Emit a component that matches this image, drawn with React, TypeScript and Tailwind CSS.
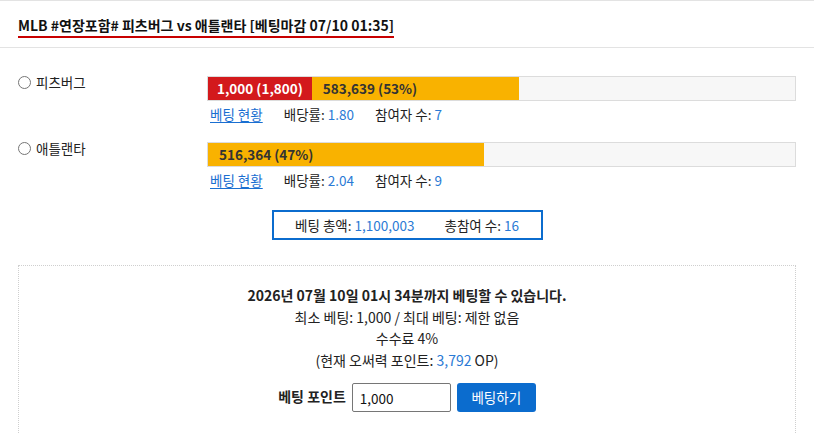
import { useState } from "react";

type Team = {
  name: string;
  total: string;
  pct: number;
  mine?: string;
  odds: string;
  players: number;
};

const teams: Team[] = [
  { name: "피츠버그", total: "583,639", pct: 53, mine: "1,000 (1,800)", odds: "1.80", players: 7 },
  { name: "애틀랜타", total: "516,364", pct: 47, odds: "2.04", players: 9 },
];

function Radio({ checked, onClick }: { checked: boolean; onClick: () => void }) {
  return (
    <span
      onClick={onClick}
      className="flex h-[13px] w-[13px] shrink-0 cursor-pointer items-center justify-center rounded-full border border-[#767676] bg-white"
    >
      {checked && <span className="h-[7px] w-[7px] rounded-full bg-[#0b6cce]" />}
    </span>
  );
}

function TeamRow({ team, checked, onPick }: { team: Team; checked: boolean; onPick: () => void }) {
  return (
    <div className="flex">
      <label className="flex w-[207px] shrink-0 items-start gap-[5px] pl-[18px] leading-[13px]">
        <span className="flex h-[13px] items-center">
          <Radio checked={checked} onClick={onPick} />
        </span>
        <span className="cursor-pointer" onClick={onPick}>
          {team.name}
        </span>
      </label>
      <div className="w-[589px]">
        <div className="flex h-[25px] border border-[#dcdcdc] bg-[#f7f7f7]">
          <div className="flex h-full" style={{ width: `${team.pct}%` }}>
            {team.mine && (
              <div className="flex h-full items-center bg-[#d3191c] px-[9px] font-bold text-white">
                {team.mine}
              </div>
            )}
            <div className="flex h-full flex-1 items-center bg-[#f9b200] px-[11px] font-semibold text-[#333]">
              {team.total} ({team.pct}%)
            </div>
          </div>
        </div>
        <div className="flex gap-[21px] pl-[3px] pt-[4px] leading-[18px]">
          <a href="#" className="text-[#1a6fd1] underline underline-offset-2">
            베팅 현황
          </a>
          <span>
            배당률: <span className="text-[#2a7ad5]">{team.odds}</span>
          </span>
          <span>
            참여자 수: <span className="text-[#2a7ad5]">{team.players}</span>
          </span>
        </div>
      </div>
    </div>
  );
}

export default function App() {
  const [pick, setPick] = useState<number | null>(null);
  const [point, setPoint] = useState("1,000");

  return (
    <div className="min-h-[433px] w-[814px] overflow-hidden bg-white font-['Noto_Sans_CJK_KR',sans-serif] text-[13.5px] text-[#222]">
      {/* title bar */}
      <div className="h-[48px] border-y border-[#e3e3e3] px-[18px] pt-[14px]">
        <span className="inline-block border-b-2 border-[#c80000] pb-[1px] text-[14px] font-bold leading-[19px] text-[#111]">
          MLB #연장포함# 피츠버그 vs 애틀랜타 [베팅마감 07/10 01:35]
        </span>
      </div>

      {/* teams */}
      <div className="flex flex-col gap-[19px] pt-[28px]">
        {teams.map((t, i) => (
          <TeamRow key={t.name} team={t} checked={pick === i} onPick={() => setPick(i)} />
        ))}
      </div>

      {/* totals */}
      <div className="flex justify-center pt-[21px]">
        <div className="flex h-[30px] w-[271px] items-center justify-center gap-[30px] border-2 border-[#0b6cce] leading-[18px]">
          <span>
            베팅 총액: <span className="text-[#2a7ad5]">1,100,003</span>
          </span>
          <span>
            총참여 수: <span className="text-[#2a7ad5]">16</span>
          </span>
        </div>
      </div>

      {/* betting form */}
      <div className="mx-[18px] mt-[25px] border border-dotted border-[#cfcfcf] pb-[40px] pt-[19px] text-[14px]">
        <div className="flex flex-col items-center leading-[21.5px]">
          <p className="font-bold">2026년 07월 10일 01시 34분까지 베팅할 수 있습니다.</p>
          <p>최소 베팅: 1,000 / 최대 베팅: 제한 없음</p>
          <p>수수료 4%</p>
          <p>
            (현재 오써력 포인트: <span className="text-[#2a7ad5]">3,792</span> OP)
          </p>
        </div>
        <div className="mt-[12px] flex items-center justify-center gap-[6px]">
          <span className="-mt-[3px] font-bold">베팅 포인트</span>
          <input
            value={point}
            onChange={(e) => setPoint(e.target.value)}
            className="h-[29px] w-[99px] rounded-[2px] border border-[#767676] px-[7px] text-[13.5px] text-[#111] outline-none"
          />
          <button className="h-[29px] w-[79px] rounded-[3px] bg-[#0b6cce] text-[13.5px] text-white">
            베팅하기
          </button>
        </div>
      </div>
    </div>
  );
}
